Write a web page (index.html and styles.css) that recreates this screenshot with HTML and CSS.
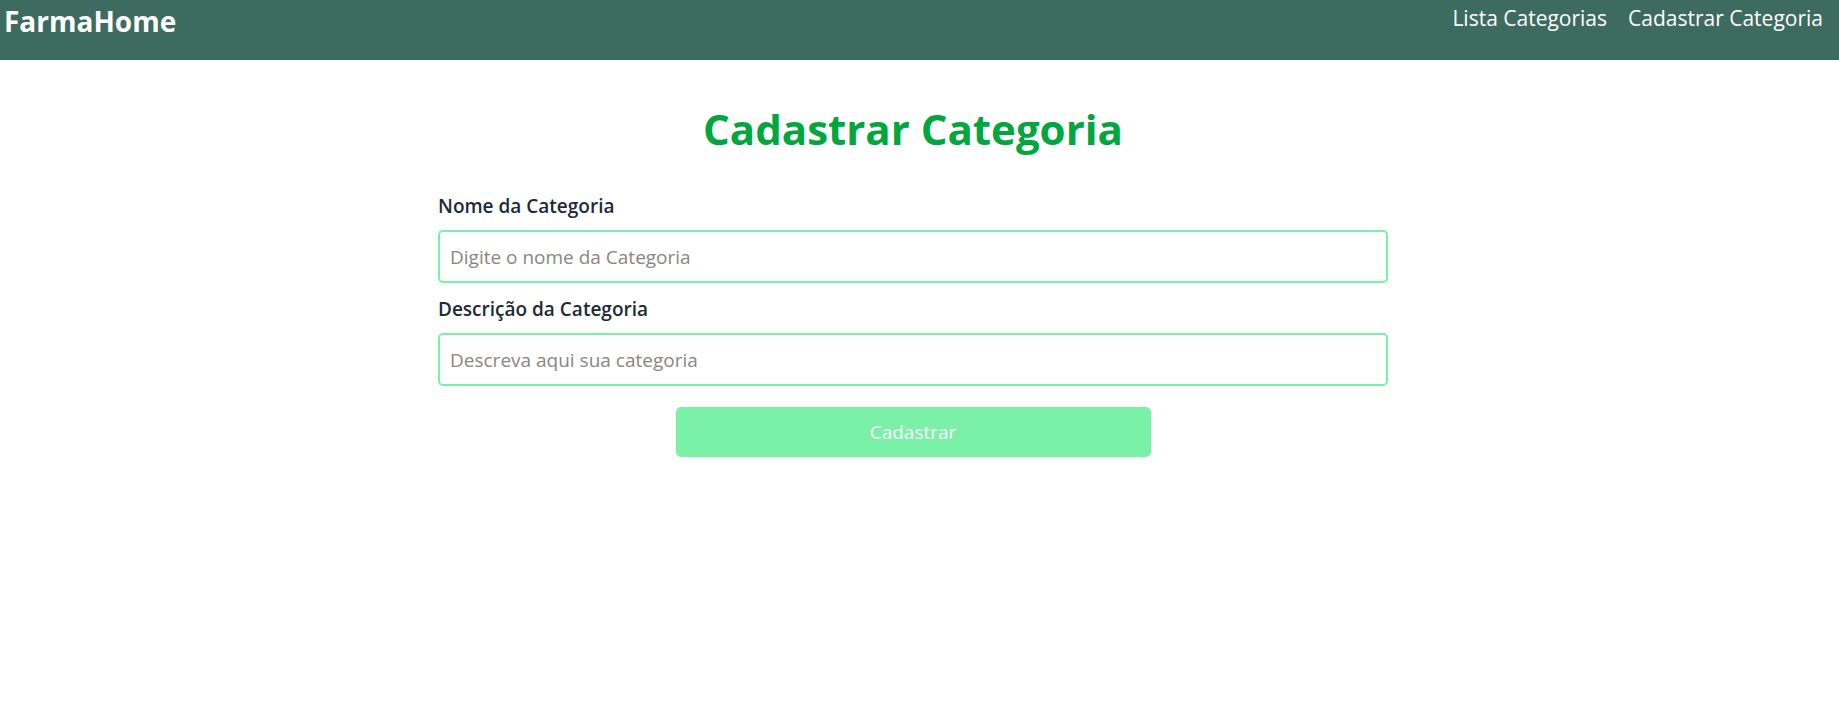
FILE: index.html
```html
<!DOCTYPE html>
<html lang="pt-BR">
<head>
<meta charset="utf-8">
<title>FarmaHome</title>
<link rel="stylesheet" href="styles.css">
</head>
<body>
<header class="navbar">
  <a class="brand" href="#">FarmaHome</a>
  <nav class="nav-links">
    <a href="#">Lista Categorias</a>
    <a href="#">Cadastrar Categoria</a>
  </nav>
</header>
<main class="page">
  <h1 class="title">Cadastrar Categoria</h1>
  <form class="form">
    <label class="label" for="nome">Nome da Categoria</label>
    <input class="input" id="nome" type="text" placeholder="Digite o nome da Categoria">
    <label class="label" for="desc">Descrição da Categoria</label>
    <input class="input" id="desc" type="text" placeholder="Descreva aqui sua categoria">
    <button class="btn" type="submit" disabled>Cadastrar</button>
  </form>
</main>
</body>
</html>
```

FILE: styles.css
```css
* { box-sizing: border-box; }
html, body { margin: 0; padding: 0; }
body {
  font-family: "Open Sans", "Noto Sans", sans-serif;
  background: #ffffff;
  color: #1e2939;
}
a { text-decoration: none; color: inherit; }

.navbar {
  height: 60px;
  background: #3d6b5f;
  display: flex;
  justify-content: space-between;
  align-items: flex-start;
  padding: 0 16px 0 4px;
  color: #ffffff;
}
.brand {
  font-size: 28px;
  font-weight: 700;
  line-height: 42px;
}
.nav-links {
  display: flex;
  gap: 21px;
  font-size: 21px;
  line-height: 36px;
}

.page {
  display: flex;
  flex-direction: column;
  align-items: center;
  padding-right: 13px;
}
.title {
  margin: 37px 0 0;
  font-size: 42px;
  line-height: 63px;
  font-weight: 700;
  color: #00a63e;
}
.form {
  width: 950px;
  display: flex;
  flex-direction: column;
  margin-top: 32px;
}
.label {
  font-size: 19px;
  font-weight: 600;
  line-height: 28px;
  margin-bottom: 10px;
  color: #1e2939;
}
.input {
  height: 53px;
  border: 2px solid #7bf1a8;
  border-radius: 5px;
  padding: 0 10px;
  font-family: inherit;
  font-size: 19px;
  color: #1e2939;
  margin-bottom: 12px;
  outline: none;
}
.input::placeholder { color: #8b8580; }
.btn {
  align-self: center;
  width: 475px;
  height: 50px;
  margin-top: 9px;
  background: #7bf1a8;
  border: none;
  border-radius: 5px;
  color: #ffffff;
  font-family: inherit;
  font-size: 19px;
}
```
